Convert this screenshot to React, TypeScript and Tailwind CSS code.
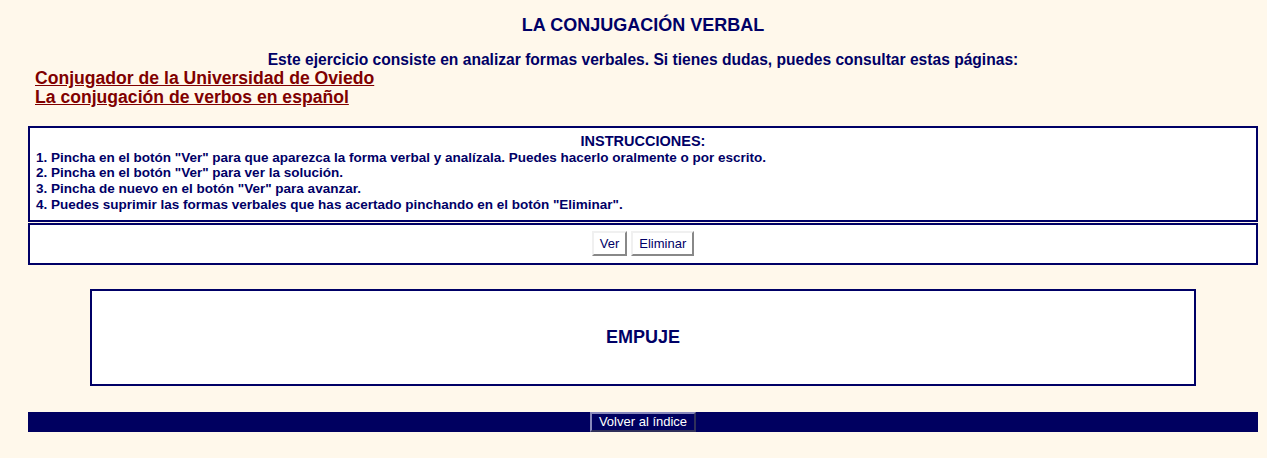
export default function App() {
  return (
    <div className="min-h-[458px] bg-[#fff8eb] text-[#000066] font-['Liberation_Sans',Arial,sans-serif]">
      <div className="ml-[28px] w-[1230px]">
        <div className="pt-[14px] text-center text-[18px] font-bold leading-[22px]">LA CONJUGACIÓN VERBAL</div>
        <div className="mt-[16px] text-center text-[15.6px] font-bold leading-[16px]">
          Este ejercicio consiste en analizar formas verbales. Si tienes dudas, puedes consultar estas páginas:
        </div>
        <div className="mt-[1px] pl-[7px] text-[17.6px] font-bold leading-[19px]">
          <a href="#" className="block w-fit text-[#800000] underline">Conjugador de la Universidad de Oviedo</a>
          <a href="#" className="block w-fit text-[#800000] underline">La conjugación de verbos en español</a>
        </div>

        <div className="mt-[19px] flex flex-col gap-[1px]">
          <div className="border-2 border-[#000066] bg-white px-[6px] pt-[6px] pb-[7px] text-[13.5px] font-bold leading-[15.7px]">
            <div className="text-center text-[14.5px]">INSTRUCCIONES:</div>
            <div>1. Pincha en el botón "Ver" para que aparezca la forma verbal y analízala. Puedes hacerlo oralmente o por escrito.</div>
            <div>2. Pincha en el botón "Ver" para ver la solución.</div>
            <div>3. Pincha de nuevo en el botón "Ver" para avanzar.</div>
            <div>4. Puedes suprimir las formas verbales que has acertado pinchando en el botón "Eliminar".</div>
          </div>
          <div className="flex h-[42px] items-center justify-center gap-[4px] border-2 border-[#000066] bg-white">
            <Btn label="Ver" />
            <Btn label="Eliminar" />
          </div>
        </div>

        <div className="mx-[62px] mt-[24px] flex h-[97px] items-center justify-center border-2 border-[#000066] bg-white text-[18px] font-bold">
          EMPUJE
        </div>

        <div className="mt-[26px] flex h-[20px] justify-center bg-[#000060]">
          <button className="h-[20px] border-2 border-t-[#8888bb] border-l-[#8888bb] border-r-[#30305a] border-b-[#30305a] bg-[#000060] px-[7px] text-[13px] leading-[14px] text-white">
            Volver al índice
          </button>
        </div>
      </div>
    </div>
  );
}

function Btn({ label }: { label: string }) {
  return (
    <button className="h-[25px] border-2 border-t-[#f0f0f0] border-l-[#f0f0f0] border-r-[#888888] border-b-[#888888] bg-white px-[6px] text-[13px] text-[#000066]">
      {label}
    </button>
  );
}
